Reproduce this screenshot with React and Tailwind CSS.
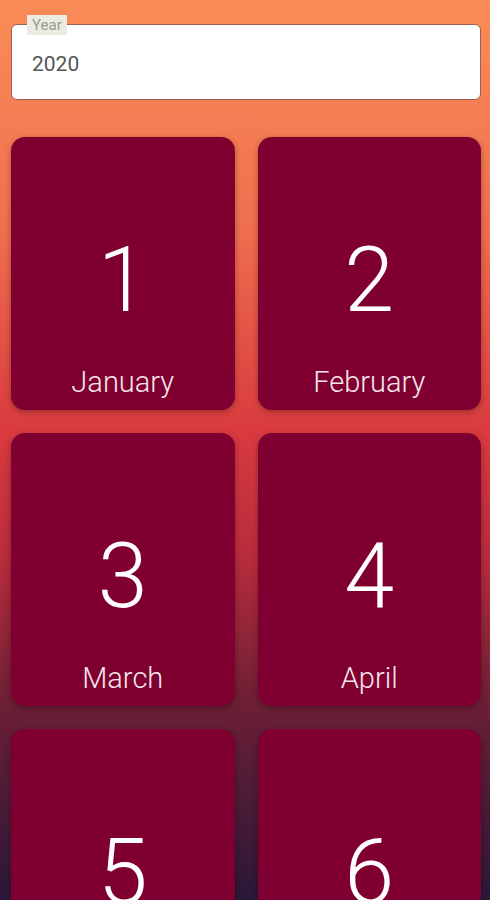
import React from 'react';

const months = [
  'January', 'February', 'March', 'April', 'May', 'June',
  'July', 'August', 'September', 'October', 'November', 'December',
];

function MonthCard({ index, name }) {
  return (
    <div className="h-[273px] rounded-[14px] bg-[#7f0030] shadow-[0_2px_6px_rgba(0,0,0,0.3)] flex flex-col items-center text-white">
      <div className="mt-[99px] text-[90px] font-light leading-none">{index}</div>
      <div className="mt-auto pb-[13px] text-[29px] font-light leading-none text-[#f4e6ea]">{name}</div>
    </div>
  );
}

export default function App() {
  return (
    <div
      className="h-screen overflow-y-auto bg-[linear-gradient(180deg,#fa8c58_0%,#f0704f_25%,#d93a3e_48%,#b82c3c_62%,#6d1f35_78%,#2a1838_100%)]"
      style={{ fontFamily: 'Roboto, "Noto Sans", sans-serif' }}
    >
      <div className="pl-[11px] pr-[9px] pt-[24px] pb-[24px]">
        <div className="relative h-[76px] rounded-[6px] bg-white border-[1.5px] border-[#9a6050] flex items-center px-[20px] pt-[5px]">
          <span className="absolute left-[15px] -top-[10px] px-[5px] bg-[#ebebe3] text-[15px] leading-[20px] text-[#9a9a92]">
            Year
          </span>
          <span className="text-[21px] text-[#555555]">2020</span>
        </div>
        <div className="mt-[37px] grid grid-cols-2 gap-x-[23px] gap-y-[23px]">
          {months.map((m, i) => (
            <MonthCard key={m} index={i + 1} name={m} />
          ))}
        </div>
      </div>
    </div>
  );
}
